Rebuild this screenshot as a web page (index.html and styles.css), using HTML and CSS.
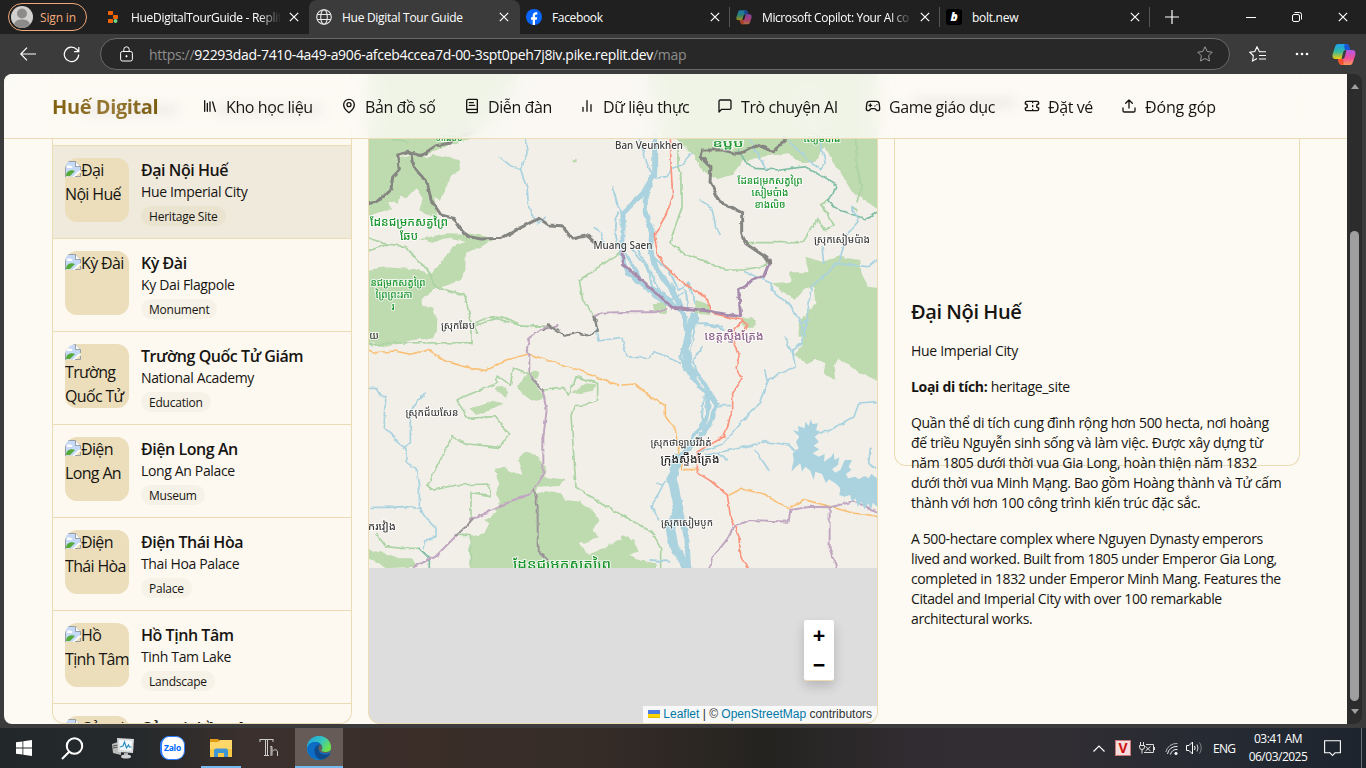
FILE: index.html
```html
<!DOCTYPE html>
<html lang="vi">
<head>
<meta charset="utf-8">
<title>Hue Digital Tour Guide</title>
<link rel="stylesheet" href="styles.css">
</head>
<body>
<svg class="defs" width="0" height="0">
  <symbol id="x" viewBox="0 0 10 10"><path d="M.8.8l8.400 8.400M9.200.8L.8 9.200" fill="none" stroke="currentColor" stroke-width="1.200"/></symbol>
  <symbol id="copilot" viewBox="0 0 24 24">
    <linearGradient id="cpA" x1="0" y1="0" x2="0" y2="1"><stop offset="0" stop-color="#1ba4f2"/><stop offset=".5" stop-color="#35b8a0"/><stop offset="1" stop-color="#f5c90a"/></linearGradient>
    <linearGradient id="cpB" x1="0" y1="0" x2="0" y2="1"><stop offset="0" stop-color="#b357e8"/><stop offset=".55" stop-color="#f0509a"/><stop offset="1" stop-color="#fb9a55"/></linearGradient>
    <path d="M6 2h8c2 0 3 2 3.500 4l.5 2h-4c-2 0-2.500 1-3 3l-1.500 6H4c-3 0-4-2-3.300-5L3 5c.6-2 1.400-3 3-3z" fill="url(#cpA)"/>
    <path d="M13 2c3 0 4 1 4.600 3.500L18.300 8H14c-2 0-2-5-1-6z" fill="#1656d8"/>
    <path d="M18 23h-8c-2 0-3-2-3.500-4L6 17h4c2 0 2.500-1 3-3l1.500-6H20c3 0 4 2 3.300 5L21 20c-.6 2-1.400 3-3 3z" fill="url(#cpB)"/>
    <path d="M11 23c-3 0-4-1-4.600-3.500L5.700 17H10c2 0 2 5 1 6z" fill="#f4512c"/>
  </symbol>
  <symbol id="broken" viewBox="0 0 16 16">
    <path d="M.5.5h10l5 5v10H.5z" fill="#c6d9f7"/><path d="M2 6c0-2 3-2 3-1 2-1 3 1 2 2H2z" fill="#fff"/>
    <path d="M1 15c0-5 5-7 9-5l-5 5z" fill="#55ab3a"/>
    <path d="M16 8L8 16h8z" fill="#ecdebb"/><path d="M10 13.500l3.500-3.500H16l-6 6H7.500z" fill="#fff"/>
    <path d="M.5 16V.5h10l5 5V9M10.500.5v5h5M10 15.500h5.500V12" fill="none" stroke="#9aa0a8"/>
    <path d="M11 1l4 4h-4z" fill="#fff"/>
  </symbol>
</svg>

<div class="tabbar">
  <div class="signin"><svg width="24" height="24" viewBox="0 0 24 24"><circle cx="12" cy="12" r="11" fill="#d2d0ce"/><circle cx="12" cy="8.500" r="5" fill="#8d8b89"/><path d="M4 19.500c1-4 4-5 8-5s7 1 8 5a11 11 0 0 1-16 0z" fill="#8d8b89"/></svg><span>Sign in</span></div>
  <div class="tab t1"><svg width="16" height="16" viewBox="0 0 16 16"><g fill="#f26207"><rect x="3" y="2" width="5" height="4" rx=".7"/><rect x="8" y="6" width="5" height="4" rx=".7"/><rect x="3" y="10" width="5" height="4" rx=".7"/></g><circle cx="10.500" cy="12" r="2" fill="#6fd58b"/></svg><span class="name fade">HueDigitalTourGuide - Replit</span><svg class="cx"><use href="#x"/></svg></div>
  <div class="tab t2 active"><svg width="16" height="16" viewBox="0 0 16 16" fill="none" stroke="#e8e8e8" stroke-width="1.100"><circle cx="8" cy="8" r="7.300"/><ellipse cx="8" cy="8" rx="3.300" ry="7.300"/><path d="M1.200 5.500h13.600M1.200 10.500h13.600"/></svg><span class="name">Hue Digital Tour Guide</span><svg class="cx"><use href="#x"/></svg></div>
  <div class="tab t3"><svg width="16" height="16" viewBox="0 0 16 16"><circle cx="8" cy="8" r="8" fill="#0866ff"/><path d="M6.700 16v-5.300H5V8.200h1.700V7c0-2.600 1.300-3.800 3.300-3.800.6 0 1 .1 1.300.2v2.200h-1c-1 0-1.300.5-1.300 1.500v1.100h2.200l-.4 2.500H9V16z" fill="#fff"/></svg><span class="name">Facebook</span><svg class="cx"><use href="#x"/></svg></div>
  <div class="tab t4"><svg width="16" height="16" opacity=".65"><use href="#copilot"/></svg><span class="name fade">Microsoft Copilot: Your AI co</span><svg class="cx"><use href="#x"/></svg></div>
  <div class="tab t5"><span class="bolt">b</span><span class="name">bolt.new</span><svg class="cx"><use href="#x"/></svg></div>
  <svg class="plus" width="14" height="14" viewBox="0 0 14 14"><path d="M7 0v14M0 7h14" stroke="#fff" stroke-width="1.200"/></svg>
  <div class="winctl">
    <svg width="10" height="10" viewBox="0 0 10 10"><path d="M0 5.500h10" stroke="#fff"/></svg>
    <svg width="10" height="10" viewBox="0 0 10 10" fill="none" stroke="#fff"><rect x=".5" y="2.500" width="7" height="7" rx="1.500"/><path d="M2.500.5h5a2 2 0 0 1 2 2v5"/></svg>
    <svg width="10" height="10"><use href="#x"/></svg>
  </div>
</div>

<div class="toolbar">
  <svg class="back" width="16" height="14" viewBox="0 0 16 14" fill="none" stroke="#fff" stroke-width="1.200"><path d="M16 7H.8M7 .6L.8 7 7 13.400"/></svg>
  <svg class="reload" width="17" height="17" viewBox="0 0 17 17" fill="none" stroke="#fff" stroke-width="1.200"><path d="M15.700 8.500a7.200 7.200 0 1 1-1.900-5L15.700 5.500M15.800 1v4.700h-4.700"/></svg>
  <div class="url">
    <svg width="13" height="16" viewBox="0 0 13 16" fill="none" stroke="#fff"><rect x=".6" y="5.500" width="11.800" height="9.500" rx="1.800"/><path d="M3.800 5.500V3.500a2.700 2.700 0 0 1 5.400 0v2"/><circle cx="6.500" cy="10.200" r=".7" fill="#fff"/></svg>
    <p><i>https://</i>92293dad-7410-4a49-a906-afceb4ccea7d-00-3spt0peh7j8iv.pike.replit.dev<i>/map</i></p>
    <svg class="star" width="16" height="16" viewBox="0 0 16 16" fill="none" stroke="#9a9a9a"><path d="M8 .8l2.200 4.700 5 .7-3.600 3.600.9 5.200L8 12.500 3.500 15l.9-5.200L.8 6.200l5-.7z"/></svg>
  </div>
  <svg class="favs" width="17" height="16" viewBox="0 0 17 16" fill="none" stroke="#fff" stroke-width="1.100"><path d="M11.500 5.500l-1.300-.2L8 .8 5.800 5.500l-5 .7 3.600 3.600-.9 5.200L8 12.600M10 5.800h7M10 9.500h7M10 13h7"/></svg>
  <svg class="dots" width="14" height="4" viewBox="0 0 14 4" fill="#fff"><circle cx="2" cy="2" r="1.300"/><circle cx="7" cy="2" r="1.300"/><circle cx="12" cy="2" r="1.300"/></svg>
  <svg class="cop" width="24" height="24"><use href="#copilot"/></svg>
</div>

<div class="window">
<div class="page">
  <header class="nav">
    <span class="smudge s1"></span><span class="smudge s2"></span><span class="smudge s3"></span>
    <div class="logo">Huế Digital</div>
    <nav>
      <a><svg viewBox="0 0 24 24"><path d="m16 6 4 14M12 6v14M8 8v12M4 4v16"/></svg>Kho học liệu</a>
      <a><svg viewBox="0 0 24 24"><path d="M20 10c0 6-8 12-8 12s-8-6-8-12a8 8 0 0 1 16 0Z"/><circle cx="12" cy="10" r="3"/></svg>Bản đồ số</a>
      <a><svg viewBox="0 0 24 24"><path d="M4 19.500v-15A2.500 2.500 0 0 1 6.500 2H19a1 1 0 0 1 1 1v18a1 1 0 0 1-1 1H6.500a1 1 0 0 1 0-5H20M8 11h8M8 7h6"/></svg>Diễn đàn</a>
      <a><svg viewBox="0 0 24 24"><path d="M18 20V10M12 20V4M6 20v-6"/></svg>Dữ liệu thực</a>
      <a><svg viewBox="0 0 24 24"><path d="M21 15a2 2 0 0 1-2 2H7l-4 4V5a2 2 0 0 1 2-2h14a2 2 0 0 1 2 2z"/></svg>Trò chuyện AI</a>
      <a><svg viewBox="0 0 24 24"><path d="M6 11h4M8 9v4M15 12h.01M18 10h.01M17.320 5H6.680a4 4 0 0 0-3.978 3.590C2.604 9.416 2 14.456 2 16a3 3 0 0 0 3 3c1 0 1.500-.5 2-1l1.414-1.414A2 2 0 0 1 9.828 16h4.344a2 2 0 0 1 1.414.586L17 18c.5.5 1 1 2 1a3 3 0 0 0 3-3c0-1.545-.604-6.584-.685-7.258A4 4 0 0 0 17.320 5z"/></svg>Game giáo dục</a>
      <a><svg viewBox="0 0 24 24"><path d="M2 9a3 3 0 0 1 0 6v2a2 2 0 0 0 2 2h16a2 2 0 0 0 2-2v-2a3 3 0 0 1 0-6V7a2 2 0 0 0-2-2H4a2 2 0 0 0-2 2ZM13 5v2M13 17v2M13 11v2"/></svg>Đặt vé</a>
      <a><svg viewBox="0 0 24 24"><path d="M21 15v4a2 2 0 0 1-2 2H5a2 2 0 0 1-2-2v-4M17 8l-5-5-5 5M12 3v12"/></svg>Đóng góp</a>
    </nav>
  </header>

  <main>
    <section class="list">
      <div class="listhead"></div>
      <article class="sel"><div class="thumb"><svg><use href="#broken"/></svg>Đại<br>Nội Huế</div><div><h3>Đại Nội Huế</h3><p>Hue Imperial City</p><span>Heritage Site</span></div></article>
      <article><div class="thumb"><svg><use href="#broken"/></svg>Kỳ Đài</div><div><h3>Kỳ Đài</h3><p>Ky Dai Flagpole</p><span>Monument</span></div></article>
      <article><div class="thumb stacked"><svg><use href="#broken"/></svg>Trường<br>Quốc Tử</div><div><h3>Trường Quốc Tử Giám</h3><p>National Academy</p><span>Education</span></div></article>
      <article><div class="thumb"><svg><use href="#broken"/></svg>Điện<br>Long An</div><div><h3>Điện Long An</h3><p>Long An Palace</p><span>Museum</span></div></article>
      <article><div class="thumb"><svg><use href="#broken"/></svg>Điện<br>Thái Hòa</div><div><h3>Điện Thái Hòa</h3><p>Thai Hoa Palace</p><span>Palace</span></div></article>
      <article><div class="thumb"><svg><use href="#broken"/></svg>Hồ<br>Tịnh Tâm</div><div><h3>Hồ Tịnh Tâm</h3><p>Tinh Tam Lake</p><span>Landscape</span></div></article>
      <article><div class="thumb"><svg><use href="#broken"/></svg>Cửu vị</div><div><h3>Cửu vị thần công</h3></div></article>
    </section>

    <section class="map">
      <svg class="tiles" width="508" height="494" viewBox="369 74 508 494">
        <filter id="rough" x="-5%" y="-5%" width="110%" height="110%"><feTurbulence type="fractalNoise" baseFrequency=".13" numOctaves="2" seed="4"/><feDisplacementMap in="SourceGraphic" scale="4" xChannelSelector="R" yChannelSelector="G"/><feGaussianBlur stdDeviation=".3"/></filter>
        <rect x="369" y="74" width="508" height="494" fill="#f2efe9"/>
        <g class="forest" filter="url(#rough)">
          <g transform="translate(366 70) scale(.33333)">
            <path d="M0 0H470L400 130 310 205 250 225 165 262 140 250 100 262 0 290z"/>
            <path d="M0 280L100 265 140 255 190 262 200 255 280 270 282 300 250 320 240 360 220 390 205 380 215 445 180 432 160 420 170 385 150 355 120 385 100 380 95 400 70 395 75 415 0 440z"/>
            <path d="M160 508L240 490 340 492 385 510 345 530 300 548 298 600 285 630 200 662 165 690 170 708 200 712 214 745 212 790H0V600L60 592 150 598 195 612 240 560 260 530 300 515 240 505 200 518z"/>
            <path d="M620 267h12v10h-12z"/>
          </g>
          <g transform="translate(622 70) scale(.33333)">
            <path d="M70 0H560V160L610 225 580 275 540 280 500 250 410 262 360 275 330 315 285 328 240 305 215 255 160 205 120 205z"/>
            <path d="M550 0H770V420L720 385 690 365 650 300 620 255 590 200z"/>
            <path d="M450 640L505 635V607H560L550 560 600 575 650 560 715 570 718 610 740 650 780 655V800H530L530 760 580 700 575 650 545 660 520 690 490 670z"/>
            <path d="M225 690l40 15 0 30-50-5zM362 745l25-3 18 20-30 15-15-10zM92 700l40-5 0 35-35-5z"/>
          </g>
          <g transform="translate(366 320) scale(.33333)">
            <path d="M0 0H212L205 55 140 60 60 80 0 65z"/>
            <path d="M310 265L350 255 385 240 412 252 380 265 330 285zM388 200l20-2 20 20-6 15-35-25zM490 155L520 155 515 175 500 180 540 235 500 245 475 225 455 205 460 190zM620 220l40-30 30 3-10 20-55 10z"/>
            <path d="M312 650L355 640 370 610 355 600 390 580 400 540 390 520 400 490 385 450 410 440 440 455 470 465 455 420 475 395 500 400 540 440 535 470 600 480 580 495 520 500 510 520 550 512 580 520 600 540 640 545 680 570 700 600 680 630 700 650 660 670 640 665 665 705 700 690 770 655V755H312zM0 690L60 700 100 715 140 715 150 740 60 745 0 710z"/>
          </g>
          <g transform="translate(622 320) scale(.33333)">
            <path d="M590 0H780V190L700 150 650 115 635 140 640 180 605 160 610 130 580 115 560 135 515 100 540 75 545 35z"/>
            <path d="M365 0h35l-5 20-20 5zM0 645L35 660 50 695 20 705 50 720 100 730 105 755H0z"/>
          </g>
        </g>
        <g class="lines" filter="url(#rough)">
          <g transform="translate(366 70) scale(.33333)">
            <path class="park" d="M0 500l50 20 70 10 30 35 40 40 15 45 90 25 20 75 20 40M0 545l60-20M325 760l45-20 90 25 85 5M760 550l-60 40-60 40 10 60 35 50M80 205l45 10"/>
            <path class="river" d="M478 200l5 50-20 50 20 50 5 60 10 25 20 25 20-18M403 262l30 25 30 12M685 470l20 20 10 30"/>
            <path class="adm" d="M685 740l20-12 80-2M545 775l30-10"/>
            <path class="border" d="M0 402l30-5 45-40 5-35 20-22-5-45 35-8 35 10 45-30 38-7 20-20 50-10M135 250l5 35 25 30 20 30 10 45 30 45 40 10 25 40 20 15 35 7 60-2 55-30 58-30 30 20 40 2 30 40 45-10 25 22"/>
            <path class="border thin" d="M685 742l10 40M530 782l20-15 30 12"/>
          </g>
          <g transform="translate(622 70) scale(.33333)">
            <path class="park" d="M168 240l0 50 12 40 0 80-36 105 46 40 65 20 60 25 50 0 60-12 18-20M375 518H542l44-70 20 32 30-15-38-60 20-18M700 180l5 110 15 60-15 45M690 410l15 10"/>
            <path class="teal" d="M350 240l20 35 30 20 75 5 75-10 60 35 32 20-10 30-15 15 20 25 45 15 50 20 35-25"/>
            <path class="river" d="M590 200l20 80-15 20-40-35-60-55M380 205l50 90M50 200l25 80 15 30M210 250l-30 35-30 10-15 25-45 5M235 390l35 25 10 50 15 30M368 605l80 35 0 20 60 50 40 70M690 410l18 45-35 40-20 80-85 75-10 70-10 80M600 530l5 50M640 580l100 10 25-20"/>
            <path class="mek" d="M98 190v120l-35 60-60 60v80l-5 40 20 60 50 40 60 30 30 30M95 310l-25 70 0 50 20 50-5 60 20 60 30 40 20 30 30 60 10 60"/>
            <path class="mekthin" d="M5 540l40 60 20 50 60 50 60-30M30 540l50 60 10 50 60 40M80 550l60 50 30 60 30-20 20 60M150 640l20 60M190 660l10 60M215 760h40l50 20M-15 430l-5 60 15 60M-30 350l25 80M15 560l30 50 50 70 40 25M50 545l35 60 30 60"/>
            <path class="main" d="M145 190l2 100 5 90-20 55-35 60 10 60 20 30 50 50 50 30 30 25 15 40 85 20 20 15-20 30"/>
            <path class="adm" d="M0 727h100l30-12"/>
            <path class="admw" d="M445 570l-20 50-35 10-20 20-20 10 6 80-106-18-40-5-60-5-100-90-45-40-5-35"/>
            <path class="border" d="M487 200l0 15-35 30-45-20-50 25-20 0-30-10-65 0-5 20 30 30-3 45 30 60 65 33 0 65 15 30 60 40 10 15"/>
          </g>
          <g transform="translate(366 320) scale(.33333)">
            <path class="park" d="M0 65l20 12 50-8 248-1V20l30-10 60-20 60 25 80 5M183 500l75-150 50 22 92 10 28-40-40-52-80 5-38-55 73-30 50-20 0-22 40 25 10-50 50 20M183 498l20 12 70-15 95-3 5 35-58-10v80M275 646h38v96M530 210l60-5 20 20 20-55 65 20 0 50-40 15-30 2-10 30 15 215 140 85M30 640l30 40 50 5 50 0"/>
            <path class="road" d="M0 88l30 10 55-5 50 10 50-16 50 35 60 18 65 12 60-32 67-18 95 30 40 12 75 30 60 20"/>
            <path class="river" d="M10 205h20l15 25 15 0-5 50 0 40 50 55 15 10 0 40 30 20 10 60 0 60 20 30 30 30 0 25-30 10-5 25M178 220l-35 40-10 50 0 55-20 20M15 562h50l50-2 50 5M690 25l10 38 60-10"/>
            <path class="teal" d="M160 685l30 30v40"/>
            <path class="adm" d="M545 18l-55 35-8 40 8 10 0 50 10 25M530 210l12 60-10 80 0 115-40 60-50 15-60 30-70 30M270 648l-60 60-70 35"/>
            <path class="gray" d="M500 178l30 32M320 600l-50 48M505 510l10 50v130l30 30"/>
            <path class="border thin" d="M548 16l48 32 40-10 35 10 25-15-10-40"/>
          </g>
          <g transform="translate(622 320) scale(.33333)">
            <path class="park" d="M0 585l88 50 28 50v60"/>
            <path class="road" d="M0 195l40-3 50 42 40 20 0 35 30 40 10 65 10 55h50M322 525l35-18 70 15 30 20 45 22 45-25 75 20 70 20 65 8 45 20"/>
            <path class="river" d="M560 0l-20 10 0 60-30 20 10 50-80 38-30 75-50 50-60 70-70 25M490 50l15 40M428 150l8 35M0 55l15 55 60 5 25-20 75 35M250 15l50 5M770 247l-60 5-15 40-80 43-60 0M250 405l100-20 80-20 70 10 30 25M290 400l25 20M400 390l40 60M290 257h35M130 480l-40 80 20 40M105 490l15 5M745 385l-5 45 20 15"/>
            <path class="mek2" d="M215 -10l-20 90 0 60 65 80"/>
            <path class="mek" d="M250 215l35 35-20 60-50 60-60 60M255 225l5 60-40 60-50 70"/>
            <path class="mek2" d="M165 415l-15 60 20 90-25 60 10 50 45 80"/>
            <path class="mek" d="M175 570l20 90 5 90"/>
            <path class="mekthin" d="M205 0l-15 60-15 50 15 40M245 230l-5 60 10 30-40 60M240 80l-25 40 10 40 30 40M85 720l60 5"/>
            <path class="main" d="M362 0l-25 30v35l15 40-10 40 18 33-28 42 0 50-16 50-10 30-80 45v63l40 25 50 42 10 70 25 55 5 60 20 35"/>
            <path class="adm" d="M265 745l5-30 40-50 25-45 50-20 115 5 5-35 60-10 60 2 70-18 75 32M623 565v120l20 60"/>
            <path class="isle" d="M212 30l-8 60M225 170l20 35M270 255l-10 45M170 610l8 80M240 330l-25 30"/>
          </g>
        </g>
        <g filter="url(#rough)" transform="translate(622 320) scale(.33333)">
          <path class="lake" d="M512 330L530 335 528 318 548 325 550 305 560 318 566 298 572 312 588 310 582 330 592 340 578 350 590 365 575 378 592 388 572 400 590 410 608 402 606 425 628 410 635 398 638 420 652 412 648 435 630 448 640 458 655 450 668 420 690 420 680 440 688 450 672 462 678 475 700 470 710 478 728 468 740 475 748 462 765 475 765 560 752 548 748 568 738 550 728 568 718 545 708 560 700 535 690 545 684 525 668 530 652 525 655 505 640 490 620 478 612 490 600 462 580 455 575 480 565 452 550 440 540 455 535 430 522 440 508 455 515 420 512 400 530 385 522 365 532 350z"/>
        </g>
        <g class="green labels">
          <text x="409" y="226" font-size="11" textLength="78" lengthAdjust="spacingAndGlyphs">ដែនជម្រកសត្វព្រៃ</text><text x="409" y="240" font-size="11" textLength="18" lengthAdjust="spacingAndGlyphs">ឆែប</text>
          <text x="398" y="286" font-size="10" textLength="55" lengthAdjust="spacingAndGlyphs">នជម្រកសត្វព្រៃ</text><text x="394" y="298" font-size="10" textLength="37" lengthAdjust="spacingAndGlyphs">ព្រៃព្រះរកា</text><text x="393" y="310" font-size="10">រ</text>
          <text x="770" y="184" font-size="10" textLength="65" lengthAdjust="spacingAndGlyphs">ដែនជម្រកសត្វព្រៃ</text><text x="770" y="196" font-size="10" textLength="37" lengthAdjust="spacingAndGlyphs">សៀមប៉ាង</text><text x="770" y="208" font-size="10" textLength="31" lengthAdjust="spacingAndGlyphs">ខាងលិច</text>
          <text x="822" y="142" font-size="10" textLength="37" lengthAdjust="spacingAndGlyphs">សៀមប៉ាង</text><text x="728" y="147" font-size="10" textLength="31" lengthAdjust="spacingAndGlyphs">ឧប្ឋប</text><text x="449" y="141" font-size="10" textLength="27" lengthAdjust="spacingAndGlyphs">ហាងបប</text>
          <text x="562" y="569" font-size="13" textLength="98" lengthAdjust="spacingAndGlyphs">ដែនជម្រកសត្វព្រៃ</text>
        </g>
        <g class="labels">
          <text x="649" y="149" font-size="11" textLength="68" lengthAdjust="spacingAndGlyphs">Ban Veunkhen</text><text x="623" y="249" font-size="11" textLength="59" lengthAdjust="spacingAndGlyphs">Muang Saen</text>
          <text x="842" y="243" font-size="10" textLength="56" lengthAdjust="spacingAndGlyphs">ស្រុកសៀមប៉ាង</text><text x="458" y="329" font-size="10" textLength="34" lengthAdjust="spacingAndGlyphs">ស្រុកឆែប</text><text x="374" y="339" font-size="10">យ</text>
          <text x="432" y="416" font-size="10" textLength="53" lengthAdjust="spacingAndGlyphs">ស្រុកជ័យសែន</text><text x="382" y="530" font-size="10" textLength="28" lengthAdjust="spacingAndGlyphs">ករវៀង</text>
          <text x="681" y="446" font-size="10" textLength="61" lengthAdjust="spacingAndGlyphs">ស្រុកថាឡាបរិវ៉ាត់</text><text x="690" y="463" font-size="11.500" textLength="59" lengthAdjust="spacingAndGlyphs" class="dark">ក្រុងស្ទឹងត្រែង</text><text x="687" y="526" font-size="10" textLength="52" lengthAdjust="spacingAndGlyphs">ស្រុកសៀមបូក</text>
          <text x="734" y="340" font-size="11.500" textLength="59" lengthAdjust="spacingAndGlyphs" class="violet">ខេត្តស្ទឹងត្រែង</text>
        </g>
      </svg>
      <div class="zoomctl"><b>+</b><b>−</b></div>
      <div class="attrib"><svg width="12" height="8" viewBox="0 0 12 8"><path fill="#4C7BE1" d="M0 0h12v4H0z"/><path fill="#FFD500" d="M0 4h12v3H0z"/><path fill="#E0BC00" d="M0 7h12v1H0z"/></svg> <a>Leaflet</a> | © <a>OpenStreetMap</a> contributors</div>
    </section>

    <section class="detail">
      <h2>Đại Nội Huế</h2>
      <p>Hue Imperial City</p>
      <p><b>Loại di tích:</b> heritage_site</p>
      <p>Quần thể di tích cung đình rộng hơn 500 hecta, nơi hoàng<br>đế triều Nguyễn sinh sống và làm việc. Được xây dựng từ<br>năm 1805 dưới thời vua Gia Long, hoàn thiện năm 1832<br>dưới thời vua Minh Mạng. Bao gồm Hoàng thành và Tử cấm<br>thành với hơn 100 công trình kiến trúc đặc sắc.</p>
      <p class="en">A 500-hectare complex where Nguyen Dynasty emperors<br>lived and worked. Built from 1805 under Emperor Gia Long,<br>completed in 1832 under Emperor Minh Mang. Features the<br>Citadel and Imperial City with over 100 remarkable<br>architectural works.</p>
    </section>
  </main>
</div>
<div class="scroll"><i class="up"></i><i class="thumbbar"></i><i class="down"></i></div>
</div>

<footer class="taskbar">
  <div class="cell"><svg width="16" height="16" viewBox="0 0 16 16" fill="#fff"><path d="M0 2.300L6.500 1.400v6.200H0zM7.300 1.300L16 0v7.600H7.300zM0 8.400h6.500v6.200L0 13.700zM7.300 8.400H16V16l-8.700-1.300z"/></svg></div>
  <div class="cell"><svg width="23" height="23" viewBox="0 0 23 23" fill="none" stroke="#fff" stroke-width="2"><circle cx="13.500" cy="9" r="7.700"/><path d="M8.200 14.800L1 22"/></svg></div>
  <div class="cell pc"><svg width="24" height="22" viewBox="0 0 24 22"><path d="M1 7l9-3v14l-8-2z" fill="#b9bbb9"/><path d="M2 9l5-1M2 11l5-1" stroke="#555"/><path d="M6 1l17 1-1 14-15-1z" fill="#d9dad9"/><path d="M8 3l13 .7-.7 10L9 13z" fill="#f2f8fb"/><path d="M9 10l3-1 1.500-4 2 6 2-3 1 2h2" fill="none" stroke="#2b8fc0" stroke-width="1.200"/><path d="M13 16h4v2h-4z" fill="#aaa"/><ellipse cx="15" cy="19.500" rx="5" ry="2" fill="#cfcfcf"/></svg></div>
  <div class="cell"><div class="zalo">Zalo</div></div>
  <div class="cell run"><svg width="22" height="18" viewBox="0 0 22 18"><path d="M0 0h8l2 2v3H0z" fill="#e19b16"/><path d="M0 3h8l2-2h12v17H0z" fill="#ffd768"/><path d="M0 10h22v8H0z" fill="#f9c945"/><path d="M4 18v-7l1.500-1.500h11L18 11v7h-4v-4H8v4z" fill="#3f96d4"/></svg></div>
  <div class="cell"><svg width="20" height="20" viewBox="0 0 20 20" fill="none" stroke="#ccc"><path d="M1 1.500h13M1 1v3M14 1v3M6.500 2v15.500M8.500 2v15.500M5 17.500h5M12 8v10M11.500 8.500h1.500v9M13.500 13c2-2 5-1.500 5 1v4"/></svg></div>
  <div class="cell on"><svg width="24" height="24" viewBox="0 0 24 24"><defs><linearGradient id="e1" x1="0" y1="0" x2="1" y2=".5"><stop offset="0" stop-color="#1c9fe0"/><stop offset=".6" stop-color="#34c4c0"/><stop offset="1" stop-color="#6be04e"/></linearGradient></defs><circle cx="12" cy="12" r="12" fill="url(#e1)"/><path d="M0 12C1 7 5 5.500 9 5.800c5 .4 6.500 4 6.500 6.200L24 14.500C23 20 18 24 12 24 5 24 0 19 0 12z" fill="#0d6cc4"/><path d="M13.500 8.500C10 8 7 11 7.500 15.500c.4 4 3 7 6.500 8.300C18 23.500 22 21 23.500 17c-5 3-11.500 1.500-11.500-3 0-2.300 1.500-3 1.500-5.500z" fill="#114a8b"/><path d="M13.500 8.200c-2.500 2-2.700 4.800-1 6.800 2.500 2.800 8 2.500 10.500 1.200 1.400-2.500 1-4.200.8-5.200-1.500 4.500-6 4-8.500 2.500-.8-.7 1-2.500-1.800-5.300z" fill="#62605f"/><path d="M24 12c0 3-3 4-5.500 4s-4-.9-4-1.700c0-.6 1.200-1.100 1-3C15 7 11 5.500 8 5.800c-4 .3-7 2.500-8 6.200C0 5 5 0 12 0s12 5.500 12 12z" fill="url(#e1)"/></svg></div>
  <div class="tray">
    <svg class="chev" width="12" height="7" viewBox="0 0 12 7" fill="none" stroke="#fff" stroke-width="1.200"><path d="M.5 6.500L6 1l5.500 5.500"/></svg>
    <span class="vn">V</span>
    <svg class="bat" width="17" height="12" viewBox="0 0 17 12" fill="none" stroke="#ddd"><path d="M1.500 0v3M4.500 0v3M.5 3.500h5V5a2 2 0 0 1-5 0zM3 7v4.500M7 2.500h7.500v8H5M15.500 5v3M6.500 4.500l5 4.500M11.500 4.500l-5 4.500"/></svg>
    <svg class="wifi" width="13" height="13" viewBox="0 0 13 13" fill="none" stroke="#eee"><path d="M.8 10A11 11 0 0 1 12.500 1.500" opacity=".7"/><path d="M2.500 12A9 9 0 0 1 12.500 4.500M5.500 12.500a6 6 0 0 1 7-5"/><circle cx="11" cy="11.500" r="1.200" fill="#fff"/></svg>
    <svg class="vol" width="17" height="14" viewBox="0 0 17 14" fill="none" stroke="#fff"><path d="M.5 4.500H3L6.500 1v12L3 9.500H.5zM8.500 5q1.200 2 0 4"/><path d="M11 3.500q2 3.500 0 7" opacity=".8"/><path d="M13.500 1.500q3.500 5.500 0 11" opacity=".4"/></svg>
    <span class="eng">ENG</span>
    <span class="clock">03:41 AM<br>06/03/2025</span>
    <svg class="note" width="17" height="17" viewBox="0 0 17 17" fill="none" stroke="#fff" stroke-width="1.100"><path d="M.6.8h15.800v12H11L8.500 15.500 6 12.800H.6z"/></svg>
    <i class="peek"></i>
  </div>
</footer>
</body>
</html>
```
FILE: styles.css
```css
* { box-sizing: border-box; }
body { margin: 0; width: 1366px; height: 768px; overflow: hidden; background: #3b3b3b; color: #171512; font-family: "Open Sans", "Noto Sans", sans-serif; display: flex; flex-direction: column; }
svg { display: block; flex: none; }
h2, h3, p { margin: 0; }
.defs { position: absolute; }

/* browser tabs */
.tabbar { height: 34px; flex: none; background: #202020; display: flex; align-items: center; color: #fff; font-size: 12px; letter-spacing: -.15px; }
.signin { width: 79px; height: 28px; margin-left: 8px; border: 1px solid #f0a878; border-radius: 14px; display: flex; align-items: center; gap: 6px; padding-left: 1px; color: #f3ab7c; letter-spacing: -.15px; }
.tab { height: 34px; width: 210px; display: flex; align-items: center; padding: 0 10px 0 6px; white-space: nowrap; }
.tab svg.cx { width: 10px; height: 10px; margin-left: auto; }
.name { margin-left: 10px; overflow: hidden; width: 152px; letter-spacing: -.28px; }
.t1 { width: 222px; padding-left: 18px; }
.t1 .name { letter-spacing: -.3px; }
.t3 .name { letter-spacing: -.35px; }
.t4 .name { letter-spacing: -.4px; }
.active { width: 211px; background: #3b3b3b; border-radius: 8px 8px 0 0; padding-left: 7px; padding-right: 11px; }
.t3, .t4, .t5 { background: linear-gradient(#555, #555) 100% 50% / 1px 20px no-repeat; }
.fade { mask-image: linear-gradient(90deg, #000 84%, transparent 99%); }
.bolt { width: 16px; height: 16px; border-radius: 3px; background: #000; font: italic 800 12px/15px "Open Sans", sans-serif; text-align: center; }
.plus { margin-left: 15px; }
.winctl { margin-left: auto; margin-right: 18px; display: flex; gap: 36px; }

/* address bar */
.toolbar { height: 40px; flex: none; display: flex; align-items: center; }
.back { margin-left: 20px; }
.reload { margin-left: 27px; }
.url { width: 1130px; height: 32px; margin-left: 20px; border: 1px solid #6a6a6a; border-radius: 16px; background: #282828; display: flex; align-items: center; padding-left: 19px; color: #fff; }
.url p { margin-left: 16px; font-size: 14px; letter-spacing: -.31px; white-space: nowrap; }
.url i { font-style: normal; color: #8d8d8d; }
.star { margin-left: auto; margin-right: 16px; }
.favs { margin-left: 19px; }
.dots { margin-left: 29px; }
.cop { margin-left: 23px; }

/* page viewport */
.window { height: 650px; flex: none; margin-left: 4px; display: flex; }
.page { position: relative; width: 1343px; height: 650px; border-radius: 8px 0 0 8px; overflow: hidden; background: #fdfaf3; }
.nav { position: absolute; z-index: 5; top: 0; left: 0; width: 100%; height: 65px; border-bottom: 1px solid #ecdcb6; background: rgba(252,250,245,.8); backdrop-filter: blur(10px); display: flex; align-items: center; padding-left: 48px; }
.logo { width: 150px; padding-top: 1px; font-size: 20px; font-weight: 700; letter-spacing: -.4px; color: transparent; background: linear-gradient(90deg, #80610f, #9c7c37 40%, #7d5f10 106px); background-clip: text; -webkit-background-clip: text; white-space: nowrap; }
nav { display: grid; grid-template-columns: 139px 123px 115px 138px 148px 159px 97px 100px; padding-top: 1px; font-size: 16px; letter-spacing: -.4px; }
nav a { display: flex; align-items: center; gap: 8px; white-space: nowrap; }
nav a:last-child { letter-spacing: -.15px; }
nav svg { width: 16px; height: 16px; margin-top: -2px; fill: none; stroke: #171512; stroke-width: 2; stroke-linecap: round; stroke-linejoin: round; }
.smudge { position: absolute; border-radius: 10px; filter: blur(6px); background: rgba(60,60,50,.07); height: 10px; }
.s1 { left: 75px; top: 31px; width: 100px; }
.s2 { left: 210px; top: 31px; width: 110px; }
.s3 { left: 908px; top: 24px; width: 105px; background: rgba(60,60,50,.08); }

main { display: grid; grid-template-columns: 300px 510px 406px; gap: 16px; padding-left: 48px; height: 650px; }
.list { border: 1px solid #ecdcb6; border-top: 0; border-radius: 0 0 12px 12px; overflow: hidden; background: #fdf9f1; }
.listhead { height: 72px; border-bottom: 1px solid #ecdcb6; }
article { height: 93px; border-bottom: 1px solid #ecdcb6; padding: 12px; display: flex; gap: 12px; white-space: nowrap; }
.sel { background: #f0eadd; }
.thumb { width: 64px; height: 64px; flex: none; border-radius: 12px; background: #ecdebb; overflow: hidden; font-size: 16px; line-height: 24px; letter-spacing: -.65px; }
.thumb svg { display: inline-block; width: 16px; height: 16px; vertical-align: -1px; }
.stacked svg { display: block; }
h3 { height: 24px; font-size: 16px; line-height: 25px; font-weight: 600; letter-spacing: -.45px; }
article p { height: 20px; font-size: 14px; line-height: 20px; letter-spacing: -.35px; }
article span { display: inline-block; margin-top: 4px; height: 20px; line-height: 21px; padding: 0 8px; border-radius: 10px; background: #f6f2e7; font-size: 12px; letter-spacing: -.22px; vertical-align: top; }
.sel span { background: #e9e3d0; }

.map { position: relative; border: 1px solid #ecdcb6; border-top: 0; border-radius: 0 0 12px 12px; overflow: hidden; background: #ddd; }
.zoomctl { position: absolute; left: 435px; top: 546px; width: 30px; height: 60px; border-radius: 2px; background: #fff; box-shadow: 0 1px 0 #ecdcb6, 0 6px 12px rgba(0,0,0,.18); font-size: 22px; }
.zoomctl b { display: block; height: 30px; line-height: 28px; text-align: center; color: #000; }
.attrib { position: absolute; right: 0; bottom: 0; width: 234px; height: 17px; padding: 0 5px; background: rgba(255,255,255,.8); font: 12px/17px "Liberation Sans", Arial, sans-serif; color: #333; white-space: nowrap; }
.attrib a { color: #0078a8; }
.attrib svg { display: inline-block; }
.forest path { fill: #bedaaf; }
.lines path { fill: none; stroke-linejoin: round; stroke-linecap: round; stroke-width: 5; }
.lines .park { stroke: #acd3a4; }
.lines .teal { stroke: #7fbda5; }
.lines .river { stroke: #aad3df; }
.lines .mek { stroke: #aad3df; stroke-width: 15; }
.lines .mek2 { stroke: #aad3df; stroke-width: 28; }
.lines .mekthin { stroke: #aad3df; stroke-width: 6; }
.lines .isle { stroke: #f2efe9; stroke-width: 4; }
.lines .road { stroke: #f9c078; }
.lines .main { stroke: #fa947d; }
.lines .adm { stroke: #c0a6c0; stroke-width: 6; }
.lines .admw { stroke: #a68bad; stroke-width: 9; }
.lines .gray { stroke: #9b9499; stroke-width: 6; }
.lines .border { stroke: #858681; stroke-width: 9; }
.lines .thin { stroke-width: 6; }
.lake { fill: #aad3df; }
.labels text { text-anchor: middle; fill: #3c3c3c; font-weight: 500; stroke: #fff; stroke-opacity: .75; stroke-width: 2; paint-order: stroke; font-family: "Noto Sans", "Noto Sans Khmer", sans-serif; }
.green text { fill: #16942a; }
.labels .dark { fill: #222; }
.labels .violet { fill: #8d618b; }

.detail { height: 392px; border: 1px solid #ecdcb6; border-top: 0; border-radius: 0 0 12px 12px; padding: 224px 0 0 16px; font-size: 14px; line-height: 20px; letter-spacing: -.31px; white-space: nowrap; }
.detail h2 { font-size: 20px; line-height: 28px; font-weight: 600; letter-spacing: -.42px; }
.detail p { margin-bottom: 16px; }
.detail h2 + p { margin-top: 15px; }
.detail .en { letter-spacing: -.38px; }

.scroll { width: 15px; height: 650px; background: #2c2c2c; border-radius: 0 8px 8px 0; display: flex; flex-direction: column; align-items: center; }
.up { margin-top: 10px; border: 4.5px solid transparent; border-top: 0; border-bottom: 5px solid #9f9f9f; }
.thumbbar { margin-top: 142px; width: 9px; height: 470px; border-radius: 5px; background: #9f9f9f; }
.down { margin-top: 8px; border: 4.5px solid transparent; border-bottom: 0; border-top: 5px solid #9f9f9f; }

/* taskbar */
.taskbar { height: 40px; flex: none; margin-top: 4px; display: flex; background: linear-gradient(90deg, #22282a, #25292b 10%, #3b302d 18%, #3b2e29 31%, #342b27 45%, #242320 56%, #312c31 67%, #302d33 78%, #252a33 90%, #1c242d); }
.cell { width: 48px; height: 40px; display: flex; align-items: center; justify-content: center; margin-right: 1px; }
.cell:nth-child(1) { margin-right: 0; }
.cell:nth-child(2) { margin-right: 1px; }
.pc { margin-left: 2px; }
.run { box-shadow: inset 0 -2px #76b9ed; width: 40px; margin: 0 4px; }
.on { background: #665b57; box-shadow: inset 0 -2px #76b9ed; margin-left: 1px; }
.zalo { width: 25px; height: 24px; border-radius: 9px; background: #fff; border: 1px solid #2a7bff; border-left-width: 2px; color: #0068ff; font-size: 8.5px; line-height: 21px; font-weight: 700; text-align: center; letter-spacing: -.2px; }
.tray { margin-left: auto; width: 273px; display: flex; align-items: center; color: #fff; font-size: 12px; white-space: nowrap; }
.vn { width: 16px; height: 16px; margin-left: 10px; background: #f6dcdc; border: 1px solid #c77; color: #c11; font: 700 14px/14px "Open Sans", sans-serif; text-align: center; }
.bat { margin-left: 8px; }
.wifi { margin-left: 9px; }
.vol { margin-left: 8px; }
.eng { margin-left: 10px; width: 25px; letter-spacing: -.7px; }
.clock { width: 74px; margin-left: 3px; text-align: center; line-height: 18px; letter-spacing: -.5px; }
.note { margin-left: 9px; }
.peek { width: 1px; height: 40px; margin-left: 20px; background: #6b7075; }
```
